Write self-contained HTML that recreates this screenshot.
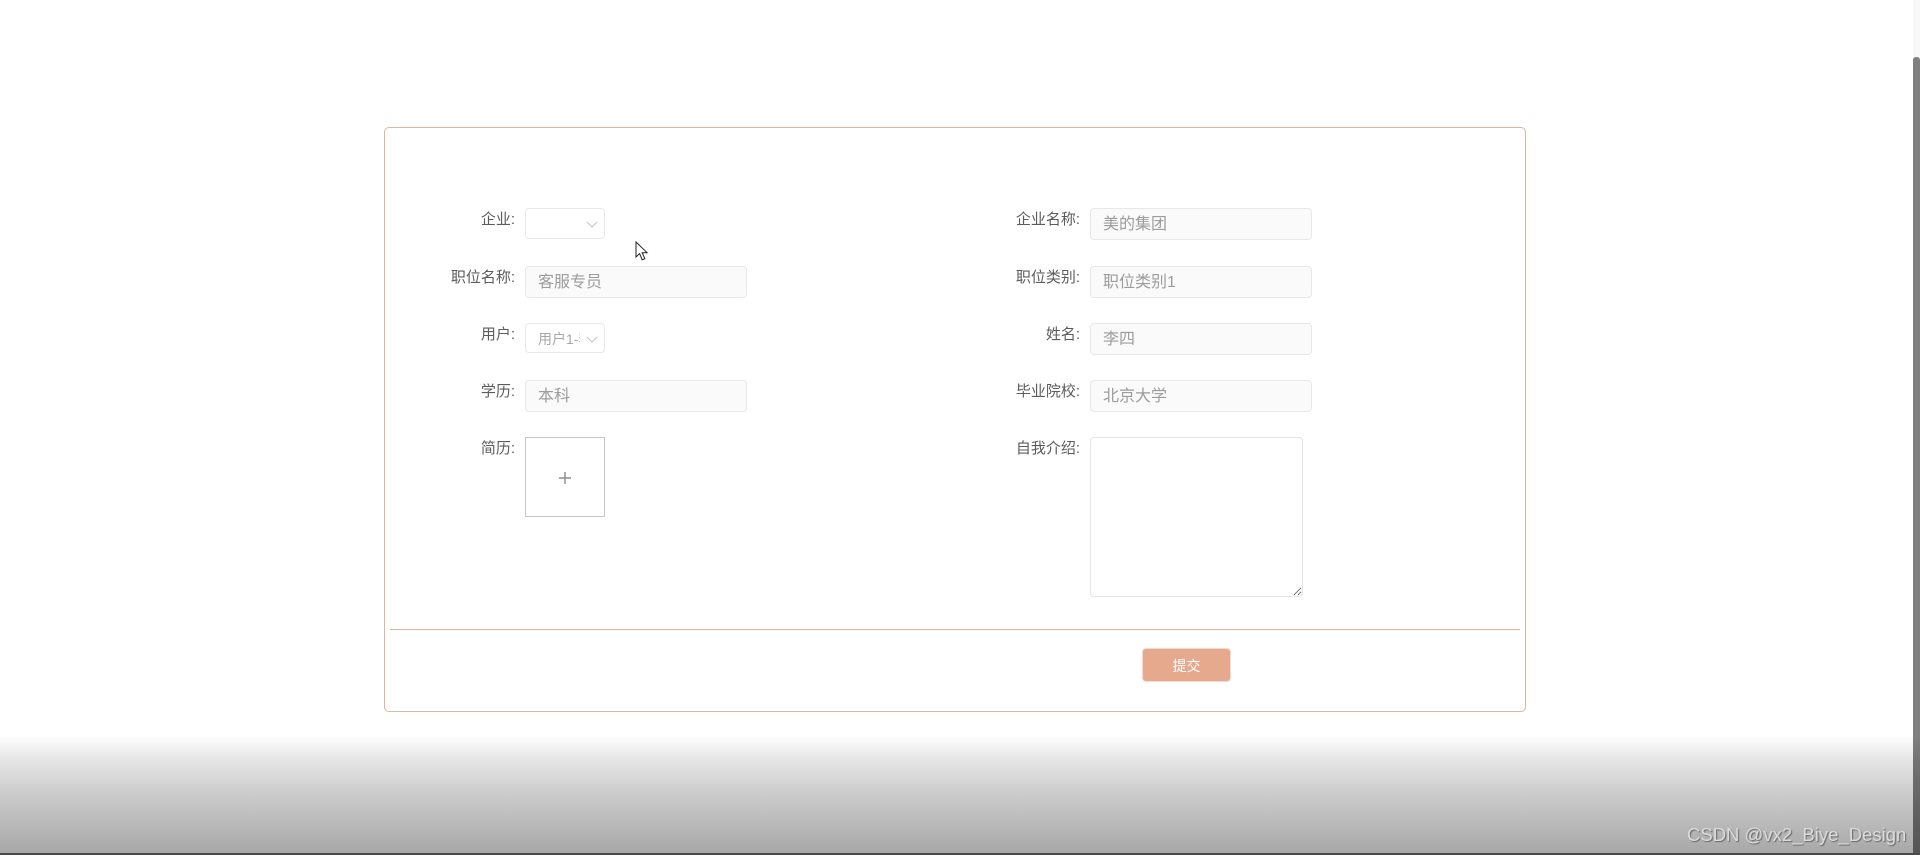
<!DOCTYPE html>
<html lang="zh"><head><meta charset="utf-8"><title>简历</title>
<style>
html,body{margin:0;padding:0;width:1920px;height:855px;overflow:hidden;background:#fff}
body{position:relative;font-family:"Liberation Sans","Noto Sans CJK SC",sans-serif}
.a{position:absolute;box-sizing:border-box}
.card{left:384px;top:127px;width:1142px;height:585px;border:1px solid #dfb69e;border-radius:5px;background:#fff}
.l{font-size:15px;line-height:20px;height:20px;color:#5c5c5c;text-align:right;width:140px;white-space:nowrap;margin-top:1px}
.i{width:222px;height:32px;background:#fafafa;border:1px solid #e8e8e8;border-radius:4px;color:#9c9c9c;font-size:16px;line-height:32px;padding-left:12px;white-space:nowrap}
.s{left:525px;width:80px;height:31px;background:#fff;border:1px solid #e8e8e8;border-radius:4px;color:#a8a8a8;font-size:14px;line-height:30px;padding-left:12px;overflow:hidden;white-space:nowrap}
.s span{display:block;width:42px;overflow:hidden}
.s svg{position:absolute;right:5px;top:8px}
.up{left:525px;top:437px;width:80px;height:80px;border:1px solid #c6c6c6}
.ta{left:1090px;top:437px;width:213px;height:160px;border:1px solid #e4e4e4;border-radius:4px;background:#fff;margin:0;padding:0;outline:0;display:block}
.hr{left:390px;top:629px;width:1130px;height:1px;background:#dcb29a}
.btn{left:1142px;top:648px;width:89px;height:34px;background:#e6a98e;border:1px solid #eedcd2;border-radius:4px;color:#fff;font-size:14px;line-height:35px;text-align:center}
.sb{left:1913px;top:0;width:7px;height:855px;background:#f8f8f8}
.th{left:1913px;top:57px;width:7px;height:798px;background:#808080;border-radius:3px 3px 0 0}
.ov{left:0;top:735px;width:1920px;height:120px;background:linear-gradient(to bottom,rgba(0,0,0,0) 0,rgba(0,0,0,.1) 25px,rgba(0,0,0,.22) 65px,rgba(0,0,0,.34) 118px);}
.bl{left:0;top:853px;width:1920px;height:2px;background:#4a4a4a}
.wm{left:1687px;top:823px;font-size:18.5px;line-height:24px;color:#dcdcdc;text-shadow:1px 1px 1px #666;white-space:nowrap}
</style></head><body>
<div class="a card"></div>

<div class="a l" style="left:375px;top:209px">企业:</div>
<div class="a s" style="top:208px"><svg width="14" height="14" viewBox="0 0 14 14"><path d="M2 5l5 5 5-5" fill="none" stroke="#c0c4cc" stroke-width="1"/></svg></div>

<div class="a l" style="left:375px;top:267px">职位名称:</div>
<div class="a i" style="left:525px;top:266px">客服专员</div>

<div class="a l" style="left:375px;top:324px">用户:</div>
<div class="a s" style="top:323px;height:30px"><span>用户1-李四</span><svg width="14" height="14" viewBox="0 0 14 14"><path d="M2 5l5 5 5-5" fill="none" stroke="#c0c4cc" stroke-width="1"/></svg></div>

<div class="a l" style="left:375px;top:381px">学历:</div>
<div class="a i" style="left:525px;top:380px">本科</div>

<div class="a l" style="left:375px;top:438px">简历:</div>
<div class="a up"><svg class="a" style="left:32px;top:33px" width="14" height="14" viewBox="0 0 14 14"><path d="M1 7h12M7 1v12" stroke="#8c8c8c" stroke-width="1.4" fill="none"/></svg></div>

<div class="a l" style="left:940px;top:209px">企业名称:</div>
<div class="a i" style="left:1090px;top:208px">美的集团</div>
<div class="a l" style="left:940px;top:267px">职位类别:</div>
<div class="a i" style="left:1090px;top:266px">职位类别1</div>
<div class="a l" style="left:940px;top:324px">姓名:</div>
<div class="a i" style="left:1090px;top:323px">李四</div>
<div class="a l" style="left:940px;top:381px">毕业院校:</div>
<div class="a i" style="left:1090px;top:380px">北京大学</div>
<div class="a l" style="left:940px;top:438px">自我介绍:</div>
<textarea class="a ta"></textarea>

<div class="a hr"></div>
<div class="a btn">提交</div>

<svg class="a" style="left:635px;top:241px" width="14" height="22" viewBox="0 0 14 22"><path d="M1 1v15l3.6-3.4 2.6 6.2 2.6-1.1-2.6-6h4.9z" fill="#fff" stroke="#222" stroke-width="1"/></svg>

<div class="a sb"></div><div class="a th"></div>
<div class="a ov"></div>
<div class="a bl"></div>
<div class="a wm">CSDN @vx2_Biye_Design</div>
</body></html>
